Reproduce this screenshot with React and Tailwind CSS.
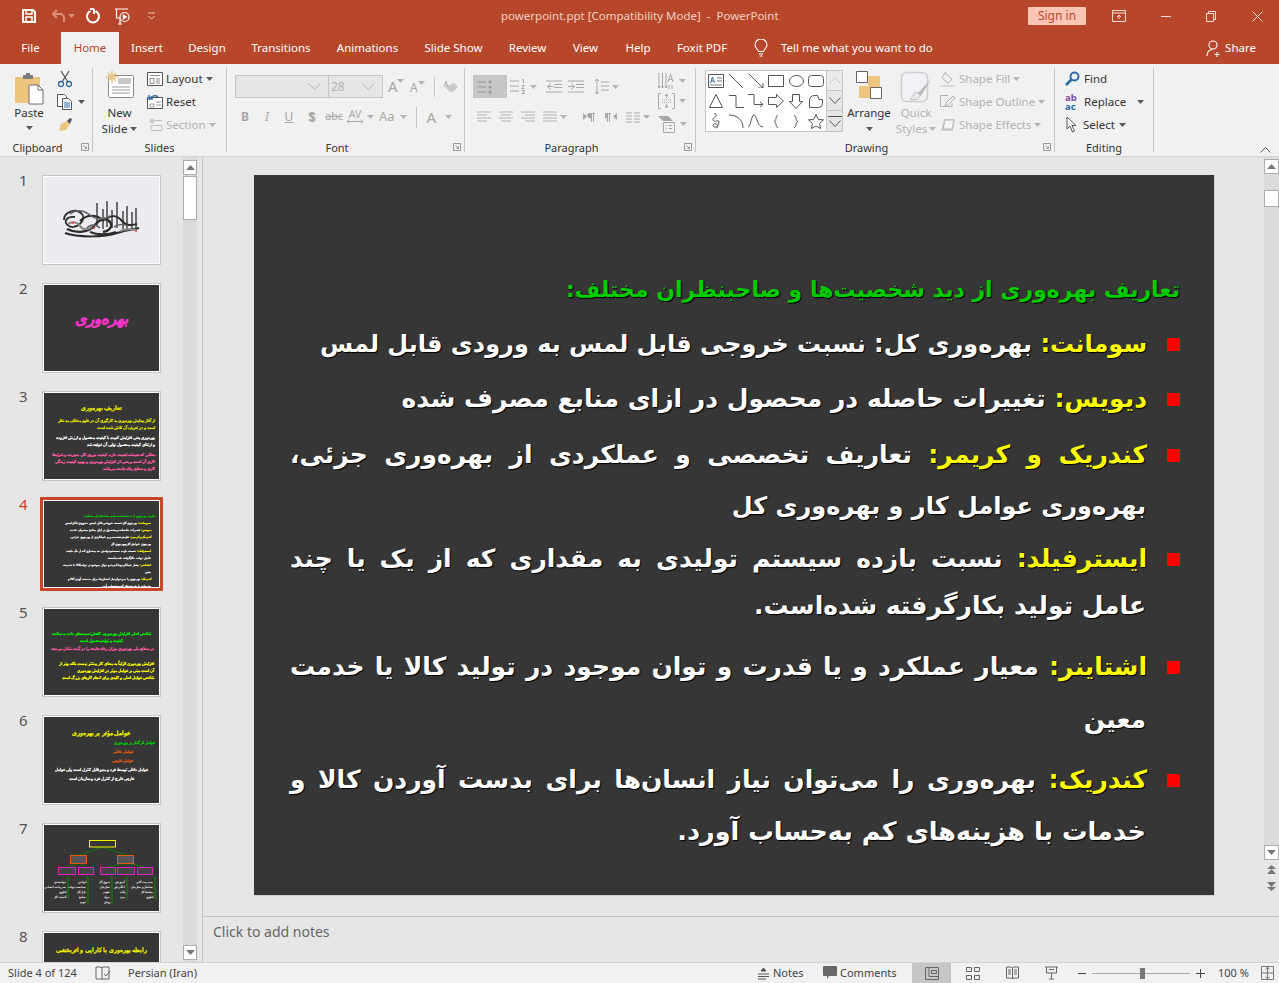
const Caret = ({ c = '#5a5a5a', className = '' }) => (
  <svg width="7" height="4" viewBox="0 0 7 4" className={className}><path d="M0 0h7L3.5 4z" fill={c} /></svg>
);

const tabs = [
  { label: 'File', w: 'w-[61px]' },
  { label: 'Home', w: 'w-[58px]', active: true },
  { label: 'Insert', w: 'w-[56px]' },
  { label: 'Design', w: 'w-[64px]' },
  { label: 'Transitions', w: 'w-[84px]' },
  { label: 'Animations', w: 'w-[89px]' },
  { label: 'Slide Show', w: 'w-[83px]' },
  { label: 'Review', w: 'w-[65px]' },
  { label: 'View', w: 'w-[51px]' },
  { label: 'Help', w: 'w-[54px]' },
  { label: 'Foxit PDF', w: 'w-[74px]' },
];

function TitleBar() {
  return (
    <div className="relative flex items-center h-[32px] bg-[#b7472a] text-white">
      <div className="flex items-center pl-[21px]">
        <svg width="16" height="16" viewBox="0 0 16 16" fill="none" stroke="#fff" strokeWidth="2" className="mr-[14px]">
          <path d="M2 2h10l2 2v10H2z" /><path d="M5 2v4h6V2M5 14V9h6v5" strokeWidth="1.5" />
        </svg>
        <svg width="15" height="14" viewBox="0 0 15 14" fill="none" stroke="#d98f7a" strokeWidth="2" className="mr-[2px]">
          <path d="M6 1L2 5l4 4M2 5h7a4 4 0 0 1 4 4v4" />
        </svg>
        <Caret c="#d98f7a" className="mr-[10px]" />
        <svg width="16" height="16" viewBox="0 0 16 16" fill="none" stroke="#fff" strokeWidth="2" className="mr-[13px]">
          <path d="M5.5 3a6 6 0 1 0 5 0M9 1v5" />
          <path d="M9 1H5" />
        </svg>
        <svg width="18" height="18" viewBox="0 0 18 18" fill="none" stroke="#fff" strokeWidth="1.2" className="mr-[15px]">
          <path d="M1 2h13M2.5 2v9H6M6 11v6M4 17h4" />
          <circle cx="10.5" cy="10" r="4.5" />
          <path d="M9.3 8v4l3-2z" fill="#fff" />
        </svg>
        <svg width="9" height="8" viewBox="0 0 9 8" fill="none" stroke="#f0c8bb" strokeWidth="1">
          <path d="M1 1h7M1.5 4L4.5 7l3-3" />
        </svg>
      </div>
      <div className="absolute left-[501px] top-[7px] text-[#f3d0c5] text-[11.5px] leading-[18px] whitespace-pre">powerpoint.ppt [Compatibility Mode]  -  PowerPoint</div>
      <div className="ml-auto flex items-center">
        <div className="w-[58px] h-[18px] rounded-[1px] bg-[#fbc5b3] text-[#b7472a] text-[12px] leading-[18px] text-center mr-[26px]">Sign in</div>
        <svg width="14" height="12" viewBox="0 0 14 12" fill="none" stroke="#f6dcd4" className="mr-[35px]">
          <path d="M.5.5h13v11H.5zM.5 3h13M7 9V5M5 7l2-2 2 2" />
        </svg>
        <div className="w-[10px] h-px bg-[#f6dcd4] mr-[35px]" />
        <svg width="10" height="11" viewBox="0 0 10 11" fill="none" stroke="#f6dcd4" className="mr-[36px]">
          <path d="M.5 2.5h7v8h-7zM2.5 2.5v-2h7v8h-2" />
        </svg>
        <svg width="11" height="11" viewBox="0 0 11 11" stroke="#f6dcd4" className="mr-[16px]"><path d="M.5.5l10 10M10.5.5l-10 10" /></svg>
      </div>
    </div>
  );
}

function TabRow() {
  return (
    <div className="flex items-stretch h-[32px] bg-[#b7472a] text-white text-[11.5px]">
      {tabs.map(t => (
        <div key={t.label} className={`${t.w} flex items-center justify-center whitespace-nowrap ${t.active ? 'bg-[#f1f1f1] text-[#b7472a]' : ''}`}>{t.label}</div>
      ))}
      <div className="flex items-center ml-[15px]">
        <svg width="14" height="18" viewBox="0 0 14 18" fill="none" stroke="#fff" strokeWidth="1.1" className="mr-[13px]">
          <path d="M4.5 12.5C4 10 1 9 1 6a6 6 0 0 1 12 0c0 3-3 4-3.500 6.500zM5 15h4M5.500 17h3" />
        </svg>
        <span>Tell me what you want to do</span>
      </div>
      <div className="ml-auto flex items-center mr-[23px]">
        <svg width="16" height="17" viewBox="0 0 16 17" fill="none" stroke="#fff" strokeWidth="1.1" className="mr-[3px]">
          <circle cx="7" cy="5" r="4" /><path d="M1 16c0-4 2-6 5-6.500M11 12v5M8.500 14.500h5" />
        </svg>
        <span>Share</span>
      </div>
    </div>
  );
}

const Launcher = () => (
  <svg width="8" height="8" viewBox="0 0 8 8" fill="none" stroke="#9a9a9a" className="absolute right-[3px] bottom-[1px]">
    <path d="M.5 7.500v-7h7v7zM2.500 2.500l3 3M5.500 3.500v2h-2" />
  </svg>
);

function Group({ w, label, children, launcher }) {
  return (
    <div className={`relative ${w} h-[84px] border-r border-[#c6c6c6] shrink-0`}>
      <div className="h-[72px] flow-root">{children}</div>
      <div className={`h-[16px] leading-[16px] text-center text-[#333] text-[11px] ${launcher ? 'pr-[17px]' : ''}`}>{label}</div>
      {launcher && <Launcher />}
    </div>
  );
}

const Lines = ({ rows = [[0, 14], [0, 14], [0, 14], [0, 14]], c = '#b4b4b4', gap = 3, w = 14 }) => (
  <svg width={w} height={rows.length * gap + 1} viewBox={`0 0 ${w} ${rows.length * gap + 1}`} stroke={c}>
    {rows.map((r, i) => <path key={i} d={`M${r[0]} ${i * gap + 1}H${r[1]}`} />)}
  </svg>
);

function Clipboard() {
  return (
    <Group w="w-[93px]" label="Clipboard" launcher>
      <div className="flex -mt-[1px]">
        <div className="w-[50px] ml-[4px] flex flex-col items-center pt-[5px] text-[#333] text-[11.5px]">
          <svg width="30" height="33" viewBox="0 0 30 33">
            <path d="M1 5h25v26H1z" fill="#edc57f" />
            <path d="M9 3h3V1h4v2h3v4H9z" fill="#7b7b7b" />
            <path d="M15 13h9l5 5v14H15z" fill="#fff" stroke="#6e6e6e" />
            <path d="M24 13v5h5" fill="none" stroke="#6e6e6e" />
          </svg>
          <div className="leading-[16px]">Paste</div>
          <Caret className="mt-[5px]" />
        </div>
        <div className="flex flex-col">
          <div className="h-[23px] flex items-center ml-[3px]">
            <svg width="16" height="18" viewBox="0 0 16 18" fill="none" stroke="#2b6ca8" strokeWidth="1.3">
              <circle cx="4" cy="14" r="2.500" /><circle cx="12" cy="14" r="2.500" />
              <path d="M5 12L12 1M11 12L4 1" stroke="#555" />
            </svg>
          </div>
          <div className="h-[23px] flex items-center ml-[3px]">
            <svg width="15" height="16" viewBox="0 0 15 16" fill="#fff" stroke="#555">
              <path d="M.5.5h7l2 2v10h-9z" /><path d="M5.500 4.500h6l3 3v8h-9z" /><path d="M7 9h6M7 11h6M7 13h6" stroke="#2b6ca8" />
            </svg>
            <Caret className="ml-[6px]" />
          </div>
          <div className="h-[23px] flex items-center ml-[3px]">
            <svg width="16" height="15" viewBox="0 0 16 15">
              <path d="M10 4l3 3-4 6-7 1 2-7z" fill="#edc57f" /><path d="M10 4l3-3 2 1-2 5z" fill="#555" />
            </svg>
          </div>
        </div>
      </div>
    </Group>
  );
}

function SlidesGroup() {
  return (
    <Group w="w-[134px]" label="Slides">
      <div className="flex -mt-[1px] text-[#333] text-[11.5px]">
        <div className="w-[49px] flex flex-col items-center pt-[3px] ml-[2px]">
          <svg width="30" height="28" viewBox="0 0 30 28" fill="none">
            <rect x="3.500" y="5.500" width="25" height="22" rx="1" fill="#fff" stroke="#8a8a8a" />
            <rect x="13" y="8" width="13" height="6" fill="#c9c9c9" />
            <path d="M7 17h18M7 20h18M7 23h18" stroke="#9a9a9a" />
            <path d="M7 1v12M1 7h12M3 3l8 8M11 3l-8 8" stroke="#edc57f" strokeWidth="1.600" />
          </svg>
          <div className="leading-[16px] mt-[7px]">New</div>
          <div className="leading-[16px] flex items-center gap-[3px]">Slide <Caret /></div>
        </div>
        <div className="flex flex-col ml-[3px]">
          <div className="h-[23px] flex items-center gap-[3px]">
            <svg width="16" height="14" viewBox="0 0 16 14" fill="#fff" stroke="#555"><path d="M.5.5h15v13H.5z" /><path d="M3 3.500h10M3 6.500h4v5H3zM9 7h4M9 9h4M9 11h4" stroke="#8a8a8a" /></svg>
            Layout <Caret />
          </div>
          <div className="h-[23px] flex items-center gap-[3px]">
            <svg width="16" height="15" viewBox="0 0 16 15" fill="none" stroke="#555"><path d="M.5 3.500h15v11H.5z" fill="#fff" /><path d="M9 8h5M9 11h5M3 10h4v3H3z" stroke="#999" /><path d="M11 3a5 5 0 0 0-8 2M2 1v4h4" stroke="#2b6ca8" strokeWidth="1.400" /></svg>
            Reset
          </div>
          <div className="h-[23px] flex items-center gap-[3px] text-[#b4b4b4]">
            <svg width="16" height="15" viewBox="0 0 16 15" fill="none" stroke="#c0c0c0"><path d="M5 1v6M2 4h6M3 2l4 4M7 2L3 6" /><path d="M4 8.500h11v5H4zM7 3.500h8" /></svg>
            Section <Caret c="#b4b4b4" />
          </div>
        </div>
      </div>
    </Group>
  );
}

function FontGroup() {
  return (
    <Group w="w-[238px]" label="Font" launcher>
      <div className="pt-[7px] pl-[8px] text-[#a8a8a8]">
        <div className="flex items-center h-[23px]">
          <div className="w-[94px] h-[23px] bg-[#e6e6e6] border border-[#c6c6c6] flex items-center justify-end pr-[7px]">
            <svg width="13" height="7" viewBox="0 0 13 7" fill="none" stroke="#b4b4b4"><path d="M.5.500l6 6 6-6" /></svg>
          </div>
          <div className="w-[54px] h-[23px] bg-[#e6e6e6] border border-[#c6c6c6] border-l-0 flex items-center justify-between pl-[2px] pr-[7px] text-[12px] text-[#b4b4b4]">
            28
            <svg width="13" height="7" viewBox="0 0 13 7" fill="none" stroke="#b4b4b4"><path d="M.5.500l6 6 6-6" /></svg>
          </div>
          <div className="w-[22px] ml-[5px] text-[15px] flex items-start leading-[15px]">A<Caret c="#b4b4b4" className="-ml-[1px]" /></div>
          <div className="w-[18px] text-[12px] flex items-start leading-[14px] mt-[2px]">A<Caret c="#b4b4b4" /></div>
          <div className="w-px h-[20px] bg-[#c6c6c6] ml-[6px]" />
          <svg width="16" height="14" viewBox="0 0 16 14" className="ml-[8px]">
            <path d="M2 7L7 12h3l5-5-4-4z" fill="#c9c9c9" /><path d="M1 7l2-6 2 6M2 5h2" fill="none" stroke="#b4b4b4" />
          </svg>
        </div>
        <div className="flex items-center h-[24px] mt-[7px] -ml-[1px] text-[12px]">
          <div className="w-[22px] text-center font-bold">B</div>
          <div className="w-[22px] text-center italic">I</div>
          <div className="w-[22px] text-center underline">U</div>
          <div className="w-[23px] text-center font-bold [text-shadow:1px_1px_1px_#aaa]">S</div>
          <div className="w-[22px] text-center text-[10.5px] line-through">abc</div>
          <div className="w-[20px] flex flex-col items-center leading-[9px] text-[10.5px]">
            AV
            <svg width="16" height="5" viewBox="0 0 16 5" fill="none" stroke="#a8a8a8"><path d="M0 2.500h16M2 .5l-2 2 2 2M14 .5l2 2-2 2" /></svg>
          </div>
          <Caret c="#b4b4b4" className="ml-[2px]" />
          <div className="ml-[5px] text-[13px]">Aa</div>
          <Caret c="#b4b4b4" className="ml-[5px]" />
          <div className="w-px h-[21px] bg-[#c6c6c6] ml-[9px]" />
          <div className="ml-[10px] text-[15px]">A</div>
          <Caret c="#b4b4b4" className="ml-[9px]" />
        </div>
      </div>
    </Group>
  );
}

function ParagraphGroup() {
  return (
    <Group w="w-[231px]" label="Paragraph" launcher>
      <div className="flex">
        <div className="w-[193px] pl-[8px] pt-[7px]">
          <div className="flex items-center h-[23px]">
            <div className="w-[34px] h-[23px] bg-[#c6c6c6] flex items-center pl-[4px]">
              <svg width="16" height="14" viewBox="0 0 16 14" stroke="#9a9a9a" fill="#9a9a9a"><path d="M0 2h9M0 7h9M0 12h9" /><circle cx="13" cy="2" r="1.500" stroke="none" /><circle cx="13" cy="7" r="1.500" stroke="none" /><circle cx="13" cy="12" r="1.500" stroke="none" /></svg>
            </div>
            <svg width="17" height="15" viewBox="0 0 17 15" stroke="#a8a8a8" fill="none" className="ml-[3px]"><path d="M0 2h9M0 7h9M0 12h9M12 1l1.500-.5V4M11.500 6.500h3l-3 3h3M11.500 11.500h3l-1.500 1.500 1.500 1.500h-3" /></svg>
            <Caret c="#b4b4b4" className="ml-[3px]" />
            <svg width="16" height="13" viewBox="0 0 16 13" fill="none" stroke="#a8a8a8" className="ml-[9px]"><path d="M0 1h16M8 4.500h8M8 7.500h8M0 12h16M5 3.500L1.500 6.500 5 9.500M1.500 6.500h6" /></svg>
            <svg width="16" height="13" viewBox="0 0 16 13" fill="none" stroke="#a8a8a8" className="ml-[6px]"><path d="M0 1h16M8 4.500h8M8 7.500h8M0 12h16M3 3.500l3.500 3-3.500 3M0 6.500h6.500" /></svg>
            <svg width="15" height="17" viewBox="0 0 15 17" fill="none" stroke="#a8a8a8" className="ml-[10px]"><path d="M3 1v15M1 3l2-2 2 2M1 14l2 2 2-2M7 4h8M7 8h8M7 12h8" /></svg>
            <Caret c="#b4b4b4" className="ml-[3px]" />
          </div>
          <div className="flex items-center h-[24px] mt-[7px] pl-[4px]">
            <Lines rows={[[0, 14], [0, 10], [0, 14], [0, 10]]} />
            <div className="ml-[8px]"><Lines rows={[[0, 14], [2, 12], [0, 14], [2, 12]]} /></div>
            <div className="ml-[8px]"><Lines rows={[[0, 14], [4, 14], [0, 14], [4, 14]]} /></div>
            <div className="ml-[8px]"><Lines /></div>
            <Caret c="#b4b4b4" className="ml-[3px]" />
            <svg width="12" height="11" viewBox="0 0 12 11" fill="#a8a8a8" className="ml-[16px]"><path d="M0 1l4 3.500L0 8zM6 1h6v1h-1v8h-1V2H9v8H8V6a2.500 2.500 0 0 1-2-5z" /></svg>
            <svg width="12" height="11" viewBox="0 0 12 11" fill="#a8a8a8" className="ml-[10px]"><path d="M12 1L8 4.500 12 8zM0 1h6v1H5v8H4V2H3v8H2V6a2.500 2.500 0 0 1-2-5z" /></svg>
            <svg width="14" height="11" viewBox="0 0 14 11" stroke="#a8a8a8" className="ml-[9px]"><path d="M0 1h6M8 1h6M0 4h6M8 4h6M0 7h6M8 7h6M0 10h6M8 10h6" /></svg>
            <Caret c="#b4b4b4" className="ml-[3px]" />
          </div>
        </div>
        <div className="flex flex-col mt-[3px]">
          <div className="h-[20px] flex items-center gap-[4px]">
            <svg width="17" height="17" viewBox="0 0 17 17" fill="none" stroke="#a8a8a8"><path d="M1 0v15M4.500 0v15M8 0v15M0 13l1 2 1-2M3.500 13l1 2 1-2M7 13l1 2 1-2M11 12v4M14 12v4" /><path d="M10 9l2.500-8L15 9M11 6.500h3" /></svg>
            <Caret c="#b4b4b4" />
          </div>
          <div className="h-[20px] flex items-center gap-[4px]">
            <svg width="17" height="16" viewBox="0 0 17 16" fill="none" stroke="#a8a8a8"><path d="M3 .5H.5v15H3M14 .5h2.500v15H14" /><path d="M4 7h9M4 9.500h9" strokeDasharray="1 1" /><path d="M8.500 1v4M7 3l1.500-2L10 3M8.500 15v-4M7 13l1.500 2 1.500-2" /></svg>
            <Caret c="#b4b4b4" />
          </div>
          <div className="h-[26px] flex items-center gap-[4px]">
            <svg width="18" height="17" viewBox="0 0 18 17" fill="none"><path d="M0 0h10l5 5H5z" fill="#a8a8a8" /><path d="M5.500 6.500h11v10h-11z" fill="#f1f1f1" stroke="#a8a8a8" /><path d="M8 9.500h1M8 12.500h1M11 9.500h3M11 12.500h3" stroke="#a8a8a8" /></svg>
            <Caret c="#b4b4b4" />
          </div>
        </div>
      </div>
    </Group>
  );
}

const shapes = [
  <svg key="0" width="16" height="14" viewBox="0 0 16 14" fill="none" stroke="#555"><path d="M.5.500h15v13H.5z" /><path d="M2.500 9l2-6 2 6M3.300 7h2.400" stroke="#2b6ca8" /><path d="M9 4h5M9 7h5M2 11h12" stroke="#777" /></svg>,
  <svg key="1" width="14" height="14" viewBox="0 0 14 14" stroke="#555"><path d="M0 0l14 14" /></svg>,
  <svg key="2" width="15" height="14" viewBox="0 0 15 14" fill="none" stroke="#555"><path d="M0 0l14 14M9 14h5V9" /></svg>,
  <svg key="3" width="16" height="12" viewBox="0 0 16 12" fill="none" stroke="#555"><path d="M.5.500h15v11H.5z" /></svg>,
  <svg key="4" width="15" height="12" viewBox="0 0 15 12" fill="none" stroke="#555"><ellipse cx="7.500" cy="6" rx="7" ry="5.500" /></svg>,
  <svg key="5" width="16" height="12" viewBox="0 0 16 12" fill="none" stroke="#555"><rect x=".5" y=".5" width="15" height="11" rx="3" /></svg>,
  <svg key="6" width="14" height="14" viewBox="0 0 14 14" fill="none" stroke="#555"><path d="M7 .5l6.500 13H.5z" /></svg>,
  <svg key="7" width="15" height="13" viewBox="0 0 15 13" fill="none" stroke="#555"><path d="M0 .5h7v12h8" /></svg>,
  <svg key="8" width="16" height="14" viewBox="0 0 16 14" fill="none" stroke="#555"><path d="M0 .5h6v10h9M12 8l3 2.500-3 2.500" /></svg>,
  <svg key="9" width="16" height="14" viewBox="0 0 16 14" fill="none" stroke="#555"><path d="M.5 3.500h8V.5L15.500 7l-7 6.500v-3h-8z" /></svg>,
  <svg key="10" width="14" height="15" viewBox="0 0 14 15" fill="none" stroke="#555"><path d="M3.500.5h7v7h3L7 14.500.5 7.500h3z" /></svg>,
  <svg key="11" width="14" height="13" viewBox="0 0 14 13" fill="none" stroke="#555"><path d="M.5 5a5 4.500 0 0 1 5-4.500h3l1.500 4h3.500v4a4 4 0 0 1-4 4h-9z" /></svg>,
  <svg key="12" width="10" height="16" viewBox="0 0 10 16" fill="none" stroke="#555"><path d="M3 1c3-1 3 2 1 3S1 7 3 8s5-2 5 1-3 6-5 5-1-4 2-3 2 4 0 4" /></svg>,
  <svg key="13" width="15" height="14" viewBox="0 0 15 14" fill="none" stroke="#555"><path d="M0 1c8 0 14 5 14 13" /></svg>,
  <svg key="14" width="16" height="14" viewBox="0 0 16 14" fill="none" stroke="#555"><path d="M0 13C3 13 3 1 6 1s3 12 9 12" /></svg>,
  <svg key="15" width="6" height="13" viewBox="0 0 6 13" fill="none" stroke="#555"><path d="M5 .5C2 .5 4 6 1 6.500c3 .5 1 6 4 6" /></svg>,
  <svg key="16" width="6" height="13" viewBox="0 0 6 13" fill="none" stroke="#555"><path d="M1 .5c3 0 1 5.500 4 6-3 .5-1 6-4 6" /></svg>,
  <svg key="17" width="16" height="15" viewBox="0 0 16 15" fill="none" stroke="#555"><path d="M8 .5l2.200 4.800 5.300.6-3.900 3.500 1 5.100L8 12l-4.600 2.500 1-5.100L.5 5.900l5.300-.6z" /></svg>,
];

function DrawingGroup() {
  const rows = [
    { t: 'Shape Fill', icon: <svg width="16" height="16" viewBox="0 0 16 16" fill="none" stroke="#b4b4b4"><path d="M5 2l7 6-4 4-6-5zM5 2l1-1" /><path d="M0 14h15v2H0z" fill="#d8d8d8" stroke="none" /></svg> },
    { t: 'Shape Outline', icon: <svg width="16" height="14" viewBox="0 0 16 14" fill="none" stroke="#b4b4b4"><path d="M8 .5H.5v11H12V8" /><path d="M6 8l7-7 2 2-7 7-3 1z" /></svg> },
    { t: 'Shape Effects', icon: <svg width="16" height="14" viewBox="0 0 16 14"><path d="M4 1h11l-2 12H1z" fill="#d0d0d0" /><path d="M5 2h9l-2 9H3z" fill="#f4f4f4" stroke="#b4b4b4" /></svg> },
  ];
  return (
    <Group w="w-[359px]" label="Drawing" launcher>
      <div className="flex pt-[2px] pl-[9px]">
        <div className="flex w-[138px] h-[62px] border border-[#c6c6c6]">
          <div className="grid grid-cols-6 grid-rows-3 w-[121px] bg-white">
            {shapes.map((s, i) => <div key={i} className="flex items-center justify-center">{s}</div>)}
          </div>
          <div className="flex flex-col w-[16px] border-l border-[#c6c6c6] bg-[#ececec]">
            <div className="h-[20px] flex items-center justify-center border-b border-[#c6c6c6]">
              <svg width="12" height="7" viewBox="0 0 12 7" fill="none" stroke="#c6c6c6"><path d="M.5 6.500l5.500-6 5.500 6" /></svg>
            </div>
            <div className="h-[20px] flex items-center justify-center border-b border-[#c6c6c6] bg-[#e6e6e6]">
              <svg width="12" height="7" viewBox="0 0 12 7" fill="none" stroke="#555"><path d="M.5.500l5.500 6 5.500-6" /></svg>
            </div>
            <div className="flex-1 flex flex-col items-center justify-center gap-[3px] bg-[#e6e6e6]">
              <div className="w-[14px] h-px bg-[#555]" />
              <svg width="12" height="7" viewBox="0 0 12 7" fill="none" stroke="#555"><path d="M.5.500l5.500 6 5.500-6" /></svg>
            </div>
          </div>
        </div>
        <div className="w-[44px] ml-[4px] flex flex-col items-center text-[11.5px] text-[#333]">
          <svg width="28" height="28" viewBox="0 0 28 28" className="mt-[1px]">
            <path d="M13 5h12v12H13zM4 15h12v12H4z" fill="#edc57f" />
            <path d="M1.500.5h11v11h-11zM15.500 16.500h11v11h-11z" fill="#fff" stroke="#666" />
          </svg>
          <div className="leading-[16px] mt-[6px]">Arrange</div>
          <Caret className="mt-[6px]" />
        </div>
        <div className="w-[44px] ml-[3px] flex flex-col items-center text-[11.5px] text-[#b4b4b4]">
          <svg width="32" height="33" viewBox="0 0 32 33" fill="none" className="mt-[1px]">
            <rect x="1.500" y="1.500" width="26" height="29" rx="5" fill="#f3f1f5" stroke="#cfcfcf" strokeWidth="1.500" />
            <path d="M31 8L18 22l3 3z" fill="#bdbdbd" />
            <path d="M17 21c-4 0-4 6-7 7 4 2 10 0 10-4z" fill="#e8e8e8" stroke="#c0c0c0" />
          </svg>
          <div className="leading-[16px] mt-[1px]">Quick</div>
          <div className="leading-[16px] flex items-center gap-[2px]">Styles <Caret c="#b4b4b4" /></div>
        </div>
        <div className="flex flex-col ml-[2px] -mt-[3px] text-[11.5px] text-[#b4b4b4]">
          {rows.map(r => (
            <div key={r.t} className="h-[23px] flex items-center gap-[3px] whitespace-nowrap">
              {r.icon}{r.t} <Caret c="#b4b4b4" />
            </div>
          ))}
        </div>
      </div>
    </Group>
  );
}

function EditingGroup() {
  return (
    <Group w="w-[99px]" label="Editing">
      <div className="flex flex-col -mt-[1px] pl-[10px] text-[11.5px] text-[#333]">
        <div className="h-[23px] flex items-center gap-[4px]">
          <svg width="15" height="15" viewBox="0 0 15 15" fill="none" stroke="#2b6ca8" strokeWidth="2"><circle cx="9.500" cy="5.500" r="4" /><path d="M6.500 8.500L1 14" strokeWidth="2.500" /></svg>
          Find
        </div>
        <div className="h-[23px] flex items-center gap-[3px]">
          <div className="w-[16px] h-[18px] text-[9.500px] leading-[9px] font-bold">
            <div className="text-[#7a4fa3]">ab</div>
            <div className="text-[#2b6ca8]">ac</div>
          </div>
          Replace
          <Caret className="ml-[8px]" />
        </div>
        <div className="h-[23px] flex items-center gap-[4px]">
          <svg width="15" height="17" viewBox="0 0 11 17" fill="#fff" stroke="#555" className="-ml-[1px]"><path d="M1 1v12l3-3 2.500 6 2-1-2.500-5.500h4z" /></svg>
          Select <Caret />
        </div>
      </div>
    </Group>
  );
}

function Ribbon() {
  return (
    <div className="relative h-[93px] bg-[#f1f1f1] border-b border-[#d4d4d4] pt-[4px]">
      <div className="flex">
        <Clipboard />
        <SlidesGroup />
        <FontGroup />
        <ParagraphGroup />
        <DrawingGroup />
        <EditingGroup />
      </div>
      <svg width="11" height="6" viewBox="0 0 11 6" fill="none" stroke="#555" className="absolute right-[8px] bottom-[3px]"><path d="M.5 5.500l5-5 5 5" /></svg>
    </div>
  );
}

const Mini = ({ c = '#fff', size = 'text-[3.800px]', className = '', children }) => (
  <div dir="rtl" className={`${size} font-bold leading-[7px] whitespace-nowrap [text-shadow:0_0_.6px_currentColor] ${className}`} style={{ color: c }}>{children}</div>
);

function Calligraphy() {
  return (
    <svg width="80" height="38" viewBox="0 0 80 38" fill="none" stroke="#2c2c2c" strokeWidth="1.300" className="mb-[2px]">
      <path d="M74 8v20M70 12v17M65 6v23M61 11v18M55 2v26M50 10v18M45 1v26M41 9v20M35 3v22" />
      <path d="M3 33c14 5 40 4 52 0s16-3 22-5" strokeWidth="2" />
      <path d="M2 20c0-9 13-12 18-6s-6 16-13 12-2-10 6-9" strokeWidth="1.800" />
      <path d="M5 29c10 5 22 3 27-3s10-9 15-5 1 10-6 11" strokeWidth="2.400" />
      <path d="M18 21c7-7 16-7 24 0M28 32c7 3 18 3 26 0M44 19c5-4 11-4 16 2s10 4 15 3" strokeWidth="2" />
      <path d="M8 14c6-5 14-4 20 1s14 5 20 1M24 29c4-5 10-5 14-1M52 27c4-3 9-3 14-1" stroke="#666" strokeWidth="1.600" />
      <path d="M6 24c4-3 10-2 12 2s8 4 12 1M58 31c5-2 11-2 16-1" stroke="#888" strokeWidth="2" />
      <circle cx="11" cy="23" r="1" fill="#f33" stroke="none" />
      <circle cx="32" cy="28" r="1" fill="#f33" stroke="none" />
      <circle cx="74" cy="31" r="1" fill="#f33" stroke="none" />
    </svg>
  );
}

const orgLists = [
  { x: 22, y: 55, bx: 24, items: ['توانمندی', 'سرمایه انسانی', 'فناوری', 'کیفیت کار'] },
  { x: 42, y: 55, bx: 44, items: ['قوانین', 'سیاست دولت', 'بازار کار', 'منابع', 'تورم'] },
  { x: 66, y: 55, bx: 68, items: ['نیروی کار', 'سازمان', 'تجهیز', 'مواد', 'روش'] },
  { x: 81, y: 55, bx: 83, items: ['آموزش', 'انگیزش', 'رفاه', 'مزد'] },
  { x: 109, y: 55, bx: 111, items: ['مدیریت کلی', 'ساختار و سازمان', 'محیط کار', 'فناوری'] },
];

function OrgChart() {
  return (
    <svg width="113" height="86" viewBox="0 0 113 86" fill="none">
      <path d="M58 22L35 30M58 22l24 8M35 38L23 42M35 38l7 4M82 38l-18 4M82 38v4M82 38l19 4" stroke="#0a7a0a" />
      <rect x="45.500" y="15.500" width="26" height="6.500" stroke="#f5f500" />
      <rect x="26.500" y="30.500" width="16" height="8" fill="#555" stroke="#e05a10" />
      <rect x="73.500" y="30.500" width="16" height="8" fill="#555" stroke="#e05a10" />
      {[[14.500, 17], [34.500, 15], [56.500, 15], [73.500, 17], [93.500, 15]].map(([x, w]) => (
        <rect key={x} x={x} y="42.500" width={w} height="7" fill="#444" stroke="#e020c0" />
      ))}
      {orgLists.map(l => (
        <g key={l.x}>
          {l.items.map((t, i) => (
            <text key={i} x={l.x} y={l.y + i * 5 + 3} textAnchor="start" direction="rtl" fontSize="3" fontWeight="700" fill="#fff">{t}</text>
          ))}
          <path d={`M${l.bx} ${l.y - 3}v${l.items.length * 5 + 2}M${l.bx} ${l.y - 3}h-2`} stroke="#0a8a0a" />
        </g>
      ))}
    </svg>
  );
}

function Thumb({ n, active, light, children, className = '' }) {
  return (
    <div className="flex shrink-0 h-[90px]">
      <div className={`w-[42px] pl-[19px] -mt-[2px] text-[15px] leading-[14px] ${active ? 'text-[#c8452a]' : 'text-[#555]'}`}>{n}</div>
      <div className={active
        ? 'w-[123px] h-[94px] -mt-[2px] -ml-[2px] border-[3px] border-[#c8452a] bg-white p-[1px]'
        : 'w-[119px] h-[90px] border border-[#c6c6c6] bg-white p-[1px]'}>
        <div className={`w-full h-full overflow-hidden flex flex-col ${light ? 'bg-[#ecedf0]' : 'bg-[#363636]'} ${className}`}>{children}</div>
      </div>
    </div>
  );
}

const lines = [
  { mt: 'mt-[93px]', title: 'تعاریف بهره‌وری از دید شخصیت‌ها و صاحبنظران مختلف:' },
  { mt: 'mt-[10px]', name: 'سومانت:', text: ' بهره‌وری کل: نسبت خروجی قابل لمس به ورودی قابل لمس', bullet: true, size: 'text-[24px]' },
  { mt: 'mt-[11px]', name: 'دیویس:', text: ' تغییرات حاصله در محصول در ازای منابع مصرف شده', bullet: true, size: 'text-[25px]' },
  { mt: 'mt-[12px]', name: 'کندریک و کریمر:', text: ' تعاریف تخصصی و عملکردی از بهره‌وری جزئی،', bullet: true, just: true, size: 'text-[25px]' },
  { mt: 'mt-[7px]', text: 'بهره‌وری عوامل کار و بهره‌وری کل', size: 'text-[24px]' },
  { mt: 'mt-[9px]', name: 'ایسترفیلد:', text: ' نسبت بازده سیستم تولیدی به مقداری که از یک یا چند', bullet: true, just: true, size: 'text-[25px]' },
  { mt: 'mt-[3px]', text: 'عامل تولید بکارگرفته شده‌است.', size: 'text-[25px]' },
  { mt: 'mt-[17px]', name: 'اشتاینر:', text: ' معیار عملکرد و یا قدرت و توان موجود در تولید کالا یا خدمت', bullet: true, just: true, size: 'text-[25px]' },
  { mt: 'mt-[9px]', text: 'معین', size: 'text-[25px]' },
  { mt: 'mt-[16px]', name: 'کندریک:', text: ' بهره‌وری را می‌توان نیاز انسان‌ها برای بدست آوردن کالا و', bullet: true, just: true, size: 'text-[25px]' },
  { mt: 'mt-[7px]', text: 'خدمات با هزینه‌های کم به‌حساب آورد.', size: 'text-[25.500px]' },
];

function ThumbPanel() {
  return (
    <div className="w-[183px] h-full overflow-hidden flex flex-col gap-[18px] pt-[18px]">
      <Thumb n="1" light className="items-center justify-center"><Calligraphy /></Thumb>
      <Thumb n="2" className="items-center justify-center pb-[20px]">
        <div dir="rtl" className="text-[15px] font-bold italic text-[#ff33cc] leading-[18px] [text-shadow:0_0_1px_#ff33cc]">بهره‌وری</div>
      </Thumb>
      <Thumb n="3" className="pt-[12px] px-[4px]">
        <Mini c="#e6e600" size="text-[5.500px]" className="text-center mb-[5px]">تعاریف بهره‌وری</Mini>
        <Mini c="#e6e600">از آغاز پیدایش بهره‌وری به کارگیری آن در علوم مختلف مد نظر</Mini>
        <Mini c="#e6e600" className="mb-[3px]">است و در تعریف آن تلاش شده است</Mini>
        <Mini>بهره‌وری یعنی افزایش کمیت با کیفیت محصول و ارزش افزوده</Mini>
        <Mini className="mb-[3px]">و ارتقای کیفیت محصول نهایی آن خواهد شد</Mini>
        <Mini c="#ff5ca8">مطلبی که همیشه اهمیت دارد، کیفیت نیروی کار، مدیریت و شرایط</Mini>
        <Mini c="#ff5ca8">کاری آن است و یعنی اثر افزایش بهره‌وری و بهبود کیفیت زندگی</Mini>
        <Mini c="#ff5ca8">کاری و سطح رفاه جامعه می‌باشد</Mini>
      </Thumb>
      <Thumb n="4" active className="pt-[11px] pl-[4px]">
        {lines.map((l, i) => (
          <Mini key={i} size="text-[3.300px]" className={`leading-[6.200px] ${l.title ? 'pr-[4px]' : 'pr-[8px]'}`} c={l.title ? '#00cc00' : '#fff'}>
            {l.title}{l.name && <span className="text-[#ffff00]">{l.name}</span>}{l.text}
          </Mini>
        ))}
      </Thumb>
      <Thumb n="5" className="pt-[21px] px-[5px]">
        <Mini c="#00ee00" className="text-center">شاخص اصلی افزایش بهره‌وری، کاهش نسبت‌های داده به ستانده</Mini>
        <Mini c="#00ee00" className="text-center mb-[1px]">کیفیت و تولید محصول است</Mini>
        <Mini c="#ff5ca8" className="mb-[8px]">در سطح ملی بهره‌وری میزان رفاه جامعه را در آینده نشان می‌دهد</Mini>
        <Mini c="#ffff00">افزایش بهره‌وری الزاماً به معنای کار بیشتر نیست بلکه بهتر از</Mini>
        <Mini c="#ffff00">آن است مبنی بر عوامل موثر در افزایش بهره‌وری</Mini>
        <Mini c="#ffff00">شاخص عوامل اصلی و کلیدی برای انجام کارهای بزرگ است</Mini>
      </Thumb>
      <Thumb n="6" className="pt-[13px] px-[4px]">
        <Mini c="#e6e600" size="text-[6px]" className="text-center mb-[2px]">عوامل مؤثر بر بهره‌وری</Mini>
        <Mini c="#00cc00" className="mb-[2px]">عوامل اثرگذار بر بهره‌وری</Mini>
        <Mini c="#e05a10" className="pr-[22px] mb-[2px]">عوامل داخلی</Mini>
        <Mini c="#e05a10" className="pr-[22px] mb-[2px]">عوامل خارجی</Mini>
        <Mini className="text-center mb-[2px]">عوامل داخلی توسط فرد و مدیر قابل کنترل است ولی عوامل</Mini>
        <Mini className="text-center">خارجی خارج از کنترل فرد و سازمان است</Mini>
      </Thumb>
      <Thumb n="7"><OrgChart /></Thumb>
      <Thumb n="8" className="pt-[14px]">
        <Mini c="#e6e600" size="text-[6px]" className="text-center">رابطه بهره‌وری با کارایی و اثربخشی</Mini>
      </Thumb>
    </div>
  );
}

const ScrollBtn = ({ up, className = '' }) => (
  <div className={`h-[15px] bg-white border border-[#ababab] flex items-center justify-center shrink-0 ${className}`}>
    <svg width="9" height="5" viewBox="0 0 9 5" fill="#777">{up ? <path d="M4.500 0L9 5H0z" /> : <path d="M0 0h9L4.500 5z" />}</svg>
  </div>
);

function Slide() {
  return (
    <div dir="rtl" className="w-[961px] h-[721px] bg-[#363636] border-r border-b border-[#d0d0d0] overflow-hidden font-bold text-white [font-family:'DejaVu_Sans',sans-serif] [text-shadow:1px_1px_1px_#000]">
      {lines.map((l, i) => l.title ? (
        <div key={i} className={`${l.mt} h-[44px] leading-[44px] pr-[34px] text-[#00cc00] text-[22px] whitespace-nowrap`}>{l.title}</div>
      ) : (
        <div key={i} className={`${l.mt} h-[44px] flex items-center pl-[36px] ${l.bullet ? 'pr-[34px]' : 'pr-[68px]'}`}>
          {l.bullet && <div className="w-[13px] h-[13px] bg-[#ff0000] ml-[20px] shrink-0" />}
          <div className={`flex-1 min-w-0 ${l.size} leading-[44px] ${l.just ? '[text-align:justify] [text-align-last:justify]' : 'whitespace-nowrap'}`}>
            {l.name && <span className="text-[#ffff00]">{l.name}</span>}{l.text}
          </div>
        </div>
      ))}
    </div>
  );
}

function StatusBar() {
  return (
    <div className="flex items-center h-[21px] bg-[#f1f1f1] border-t border-[#d4d4d4] text-[#444] text-[11px] whitespace-nowrap">
      <span className="ml-[8px] w-[80px]">Slide 4 of 124</span>
      <svg width="16" height="14" viewBox="0 0 16 14" fill="none" stroke="#666" className="ml-[7px]"><path d="M1 1h5l1 1 1-1h6v12H8l-1 .5L6 13H1zM7 2v11M9 8l2 2 4-5" /></svg>
      <span className="ml-[17px]">Persian (Iran)</span>
      <div className="ml-auto flex items-center h-full">
        <svg width="11" height="13" viewBox="0 0 11 13" stroke="#555" className="mr-[4px]"><path d="M0 7h11M0 9.500h11M0 12h8" /><path d="M3 4l2.500-3L8 4z" fill="#555" /></svg>
        <span className="w-[50px]">Notes</span>
        <svg width="14" height="14" viewBox="0 0 14 14" fill="#666" className="mr-[3px]"><path d="M1 0h12a1 1 0 0 1 1 1v8a1 1 0 0 1-1 1H6l-2 3v-3H1a1 1 0 0 1-1-1V1a1 1 0 0 1 1-1z" /></svg>
        <span className="w-[72px]">Comments</span>
        <div className="w-[39px] h-full bg-[#c6c6c6] flex items-center justify-center">
          <svg width="14" height="13" viewBox="0 0 14 13" fill="none" stroke="#666"><path d="M.5.5h13v12H.5zM4 .5v9h9.500M6.500 3.500h5v3h-5z" /></svg>
        </div>
        <svg width="14" height="13" viewBox="0 0 14 13" fill="none" stroke="#666" className="ml-[15px]"><path d="M.5.5h5v4h-5zM8.500.5h5v4h-5zM.5 8.500h5v4h-5zM8.500 8.500h5v4h-5z" /></svg>
        <svg width="13" height="14" viewBox="0 0 13 14" fill="none" stroke="#666" className="ml-[26px]"><path d="M.5 1h5l1 1 1-1h5v11h-5l-1 1-1-1h-5zM6.500 2v11M2 4h3M2 6h3M2 8h3M8 4h3M8 6h3M8 8h3" /></svg>
        <svg width="13" height="14" viewBox="0 0 13 14" fill="none" stroke="#666" className="ml-[26px]"><path d="M0 1h13M1.500 1v6h10V1M6.500 7v6M4 13h5M4 3.500h5" /></svg>
        <div className="w-[8px] h-px bg-[#444] ml-[20px]" />
        <div className="relative w-[98px] h-px bg-[#aaa] ml-[6px] flex items-center">
          <div className="ml-[48px] w-[5px] h-[11px] bg-[#777] shrink-0" />
        </div>
        <svg width="9" height="9" viewBox="0 0 9 9" stroke="#444" className="ml-[6px]"><path d="M0 4.500h9M4.500 0v9" /></svg>
        <span className="w-[30px] ml-[13px]">100 %</span>
        <svg width="13" height="14" viewBox="0 0 13 14" fill="none" stroke="#777" className="ml-[13px] mr-[5px]"><path d="M.5.5h12v13H.5zM.5 7h12M6.500.5v13M4.500 3l2-1.500L8.500 3M4.500 11l2 1.500 2-1.500" /></svg>
      </div>
    </div>
  );
}

export default function App() {
  return (
    <div className="w-[1279px] h-[983px] flex flex-col overflow-hidden bg-[#e6e6e6] [font-family:'Noto_Sans','Open_Sans',sans-serif]">
      <TitleBar />
      <TabRow />
      <Ribbon />
      <div className="flex-1 min-h-0 flex">
        <ThumbPanel />
        <div className="w-[14px] h-full bg-[#dbdbdb] flex flex-col pt-[3px] pb-[2px]">
          <ScrollBtn up />
          <div className="h-[44px] bg-white border border-[#ababab] mt-[1px]" />
          <ScrollBtn className="mt-auto" />
        </div>
        <div className="w-[6px] h-full border-r border-[#c6c6c6]" />
        <div className="flex-1 min-w-0 flex flex-col">
          <div className="h-[760px] flex border-b border-[#c6c6c6]">
            <div className="flex-1 min-w-0 pt-[18px] pl-[51px] overflow-hidden"><Slide /></div>
            <div className="w-[15px] flex flex-col">
              <div className="h-[703px] bg-[#dbdbdb] flex flex-col pt-[2px]">
                <ScrollBtn up />
                <div className="h-[17px] bg-white border border-[#ababab] mt-[16px]" />
                <ScrollBtn className="mt-auto" />
              </div>
              <div className="flex flex-col items-center gap-[8px] pt-[5px]">
                <svg width="9" height="9" viewBox="0 0 9 9" fill="#777"><path d="M4.500 0L9 4H0zM4.500 4L9 9H0z" /></svg>
                <svg width="9" height="9" viewBox="0 0 9 9" fill="#777"><path d="M0 0h9L4.500 5zM0 5h9L4.500 9z" /></svg>
              </div>
            </div>
          </div>
          <div className="pl-[10px] pt-[5px] text-[14px] leading-[20px] text-[#666]">Click to add notes</div>
        </div>
      </div>
      <StatusBar />
    </div>
  );
}
